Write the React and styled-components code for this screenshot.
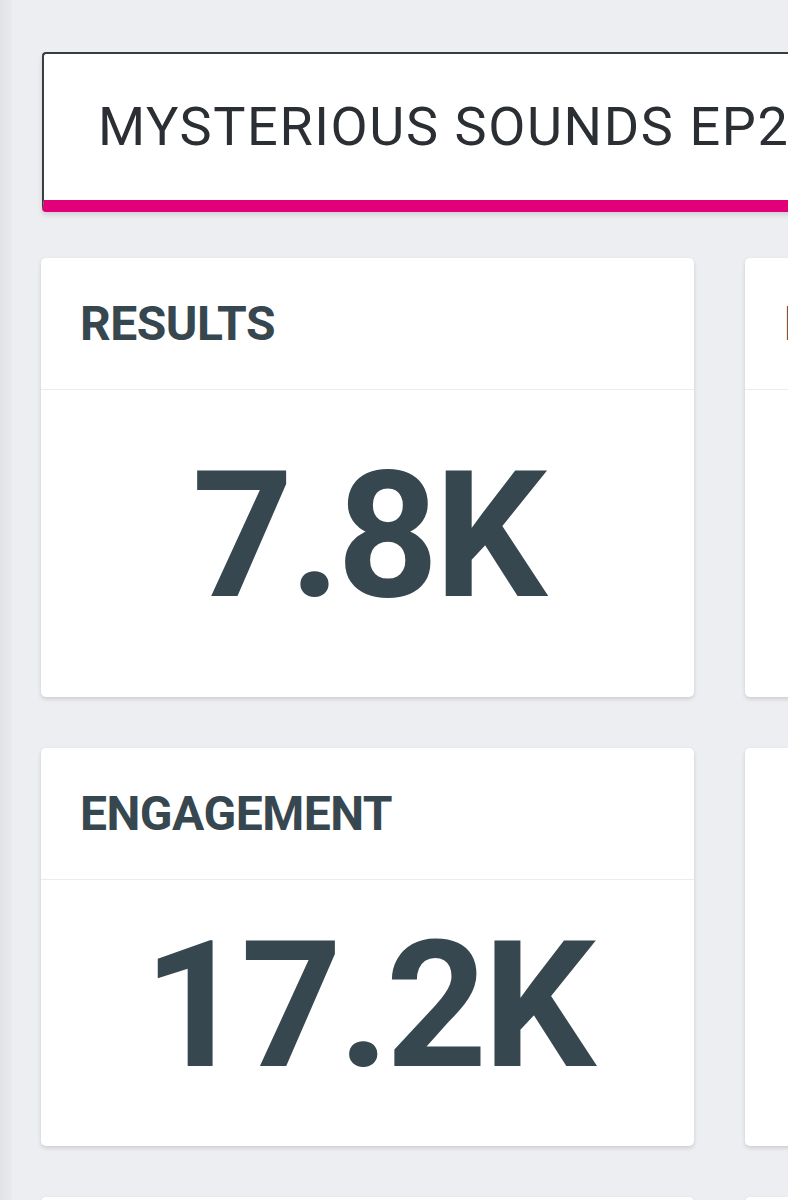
import React from "react";
import styled, { createGlobalStyle } from "styled-components";

const GlobalStyle = createGlobalStyle`
  html, body {
    margin: 0;
    padding: 0;
    background: #edeef1;
    overflow: hidden;
  }
  body {
    font-family: Roboto, "Liberation Sans", sans-serif;
  }
`;

const App = () => {
  return (
    <>
      <GlobalStyle />
      <Page>
        <SideEdge />
        <Main>
          <TitleCard>
            <Title>MYSTERIOUS SOUNDS EP2</Title>
          </TitleCard>
          <Grid>
            <StatCard>
              <CardHeader>RESULTS</CardHeader>
              <CardBody $height={307}>
                <BigNumber>7.8K</BigNumber>
              </CardBody>
            </StatCard>
            <StatCard>
              <CardHeader>REACH</CardHeader>
              <CardBody $height={307} />
            </StatCard>
            <StatCard>
              <CardHeader>ENGAGEMENT</CardHeader>
              <CardBody $height={266}>
                <BigNumber>17.2K</BigNumber>
              </CardBody>
            </StatCard>
            <PlainCard />
            <StatCard>
              <CardBody $height={300} />
            </StatCard>
            <StatCard>
              <CardBody $height={300} />
            </StatCard>
          </Grid>
        </Main>
      </Page>
    </>
  );
};

export default App;

const Page = styled.div`
  display: flex;
  width: 1500px;
  min-height: 1200px;
`;

const SideEdge = styled.div`
  width: 12px;
  flex-shrink: 0;
  background: linear-gradient(to right, #e2e3e6, #e9eaed);
`;

const Main = styled.div`
  padding: 52px 0 0 30px;
  display: flex;
  flex-direction: column;
  gap: 46px;
`;

const TitleCard = styled.div`
  width: 1357px;
  height: 160px;
  box-sizing: border-box;
  background: #fff;
  border-top: 2px solid #3a3d40;
  border-left: 2px solid #3a3d40;
  border-bottom: 12px solid #e2007a;
  border-radius: 4px 0 0 4px;
  box-shadow: 0 3px 5px rgba(0, 0, 0, 0.12);
  display: flex;
  align-items: center;
  padding: 0 0 2px 54px;
`;

const Title = styled.h1`
  margin: 0;
  font-family: Roboto, "Liberation Sans", sans-serif;
  font-weight: 400;
  font-size: 54px;
  color: #2b2f33;
  letter-spacing: 1.6px;
  white-space: nowrap;
`;

const Grid = styled.div`
  display: grid;
  grid-template-columns: 653px 653px;
  column-gap: 51px;
  row-gap: 51px;
  margin-left: -1px;
`;

const StatCard = styled.div`
  background: #fff;
  border-radius: 5px;
  box-shadow: 0 2px 4px rgba(0, 0, 0, 0.14);
  display: flex;
  flex-direction: column;
`;

const PlainCard = styled(StatCard)`
  min-height: 398px;
`;

const CardHeader = styled.div`
  height: 131px;
  display: flex;
  align-items: center;
  padding-left: 39px;
  border-bottom: 1px solid #ececee;
  font-family: Roboto, "Liberation Sans", sans-serif;
  font-weight: 700;
  font-size: 48px;
  color: #37474f;
  letter-spacing: -0.5px;
`;

const CardBody = styled.div`
  height: ${(p) => p.$height}px;
  box-sizing: border-box;
  display: flex;
  align-items: center;
  justify-content: center;
  padding-bottom: 16px;
`;

const BigNumber = styled.div`
  font-family: Roboto, "Liberation Sans", sans-serif;
  font-weight: 700;
  font-size: 177px;
  line-height: 1;
  color: #37474f;
  letter-spacing: -4px;
`;
